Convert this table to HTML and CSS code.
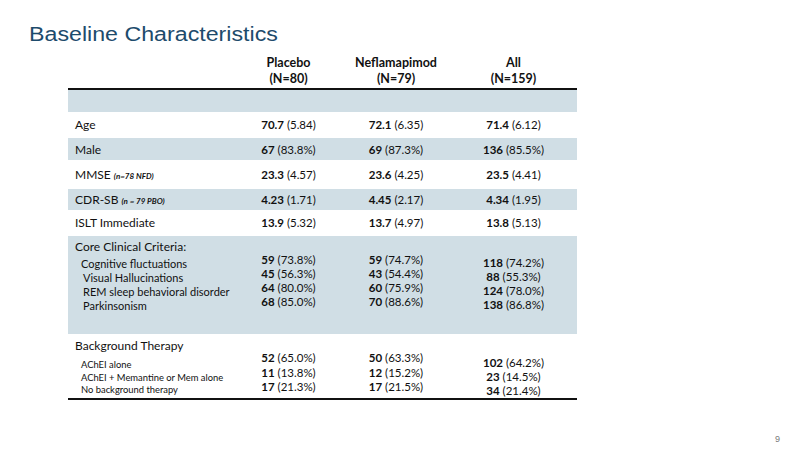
FILE: index.html
```html
<!DOCTYPE html>
<html lang="en">
<head>
<meta charset="utf-8">
<title>Baseline Characteristics</title>
<link rel="stylesheet" href="styles.css">
</head>
<body>
<div class="slide">
  <h1 class="title">Baseline Characteristics</h1>
  <div class="table">
    <div class="row head">
      <div></div>
      <div class="c">Placebo<br>(N=80)</div>
      <div class="c">Neflamapimod<br>(N=79)</div>
      <div class="c">All<br>(N=159)</div>
    </div>
    <div class="row band blank"></div>
    <div class="row r-age">
      <div class="lbl">Age</div>
      <div class="c"><b>70.7</b> (5.84)</div>
      <div class="c"><b>72.1</b> (6.35)</div>
      <div class="c"><b>71.4</b> (6.12)</div>
    </div>
    <div class="row band r-male">
      <div class="lbl">Male</div>
      <div class="c"><b>67</b> (83.8%)</div>
      <div class="c"><b>69</b> (87.3%)</div>
      <div class="c"><b>136</b> (85.5%)</div>
    </div>
    <div class="row r-mmse">
      <div class="lbl">MMSE <span class="note">(n=78 NFD)</span></div>
      <div class="c"><b>23.3</b> (4.57)</div>
      <div class="c"><b>23.6</b> (4.25)</div>
      <div class="c"><b>23.5</b> (4.41)</div>
    </div>
    <div class="row band r-cdr">
      <div class="lbl">CDR-SB <span class="note">(n = 79 PBO)</span></div>
      <div class="c"><b>4.23</b> (1.71)</div>
      <div class="c"><b>4.45</b> (2.17)</div>
      <div class="c"><b>4.34</b> (1.95)</div>
    </div>
    <div class="row r-islt">
      <div class="lbl">ISLT Immediate</div>
      <div class="c"><b>13.9</b> (5.32)</div>
      <div class="c"><b>13.7</b> (4.97)</div>
      <div class="c"><b>13.8</b> (5.13)</div>
    </div>
    <div class="row band r-core">
      <div class="lbl">
        <div class="grp">Core Clinical Criteria:</div>
        <div class="sub first">Cognitive fluctuations</div>
        <div class="sub ind">Visual Hallucinations</div>
        <div class="sub ind">REM sleep behavioral disorder</div>
        <div class="sub ind">Parkinsonism</div>
      </div>
      <div class="c vals">
        <div><b>59</b> (73.8%)</div>
        <div><b>45</b> (56.3%)</div>
        <div><b>64</b> (80.0%)</div>
        <div><b>68</b> (85.0%)</div>
      </div>
      <div class="c vals">
        <div><b>59</b> (74.7%)</div>
        <div><b>43</b> (54.4%)</div>
        <div><b>60</b> (75.9%)</div>
        <div><b>70</b> (88.6%)</div>
      </div>
      <div class="c vals low">
        <div><b>118</b> (74.2%)</div>
        <div><b>88</b> (55.3%)</div>
        <div><b>124</b> (78.0%)</div>
        <div><b>138</b> (86.8%)</div>
      </div>
    </div>
    <div class="row r-bg">
      <div class="lbl">
        <div class="grp">Background Therapy</div>
        <div class="sm first">AChEI alone</div>
        <div class="sm">AChEI + Memantine or Mem alone</div>
        <div class="sm">No background therapy</div>
      </div>
      <div class="c vals2">
        <div><b>52</b> (65.0%)</div>
        <div><b>11</b> (13.8%)</div>
        <div><b>17</b> (21.3%)</div>
      </div>
      <div class="c vals2">
        <div><b>50</b> (63.3%)</div>
        <div><b>12</b> (15.2%)</div>
        <div><b>17</b> (21.5%)</div>
      </div>
      <div class="c vals2 low">
        <div><b>102</b> (64.2%)</div>
        <div><b>23</b> (14.5%)</div>
        <div><b>34</b> (21.4%)</div>
      </div>
    </div>
  </div>
  <div class="page">9</div>
</div>
</body>
</html>
```

FILE: styles.css
```css
html, body {
  margin: 0;
  padding: 0;
  background: #ffffff;
}

.slide {
  width: 800px;
  height: 450px;
  position: relative;
  overflow: hidden;
  font-family: "Lato", "Liberation Sans", sans-serif;
  color: #111111;
}

.title {
  margin: 0;
  padding: 22px 0 0 25px;
  font-family: "Liberation Sans", Arial, sans-serif;
  font-weight: normal;
  font-size: 20px;
  line-height: 24px;
  color: #1d4b6c;
  transform: scaleX(1.16);
  transform-origin: left top;
  white-space: nowrap;
}

.table {
  margin: 9px 0 0 68px;
  width: 509px;
  border-bottom: 2px solid #111;
}

.row {
  display: grid;
  grid-template-columns: 167px 107px 108px 127px;
  align-items: center;
  font-size: 12px;
}

.row b {
  font-weight: 700;
}

.head {
  height: 33px;
  font-weight: 700;
  font-size: 12px;
  line-height: 16px;
  border-bottom: 2px solid #111;
  align-items: start;
}

.head .c {
  font-size: 12.5px;
}

.c {
  text-align: center;
  font-size: 11.5px;
  white-space: nowrap;
}

.lbl {
  padding-left: 7px;
  white-space: nowrap;
}

.band {
  background: #d0dee5;
  border-top: 1px solid #fff;
}

.blank { height: 22px; border-top: 0; }
.r-age { height: 25px; }
.r-male { height: 22px; }
.r-mmse { height: 28px; }
.r-cdr { height: 21px; }
.r-islt { height: 25px; }

.note {
  font-size: 8px;
  font-style: italic;
  font-weight: 700;
}

.r-core {
  height: 98px;
  align-items: start;
  border-top: 1px solid #fff;
}

.r-core .lbl {
  padding-top: 4px;
}

.grp {
  line-height: 14px;
}

.sub {
  font-size: 11px;
  line-height: 14px;
  padding-left: 8px;
}

.sub.first {
  margin-top: 3px;
  padding-left: 6px;
}

.vals {
  padding-top: 17px;
  line-height: 14px;
}

.vals.low {
  padding-top: 20px;
}

.r-bg {
  height: 64px;
  align-items: start;
}

.r-bg .lbl {
  padding-top: 5px;
}

.sm {
  font-size: 9.4px;
  line-height: 12.5px;
  padding-left: 6px;
}

.sm.first {
  margin-top: 6px;
}

.vals2 {
  padding-top: 17px;
  line-height: 14.5px;
}

.vals2.low {
  padding-top: 22px;
  line-height: 14px;
}

.page {
  position: absolute;
  right: 20px;
  bottom: 6px;
  font-family: "Liberation Sans", Arial, sans-serif;
  font-size: 9px;
  color: #7a7a7a;
}
```
